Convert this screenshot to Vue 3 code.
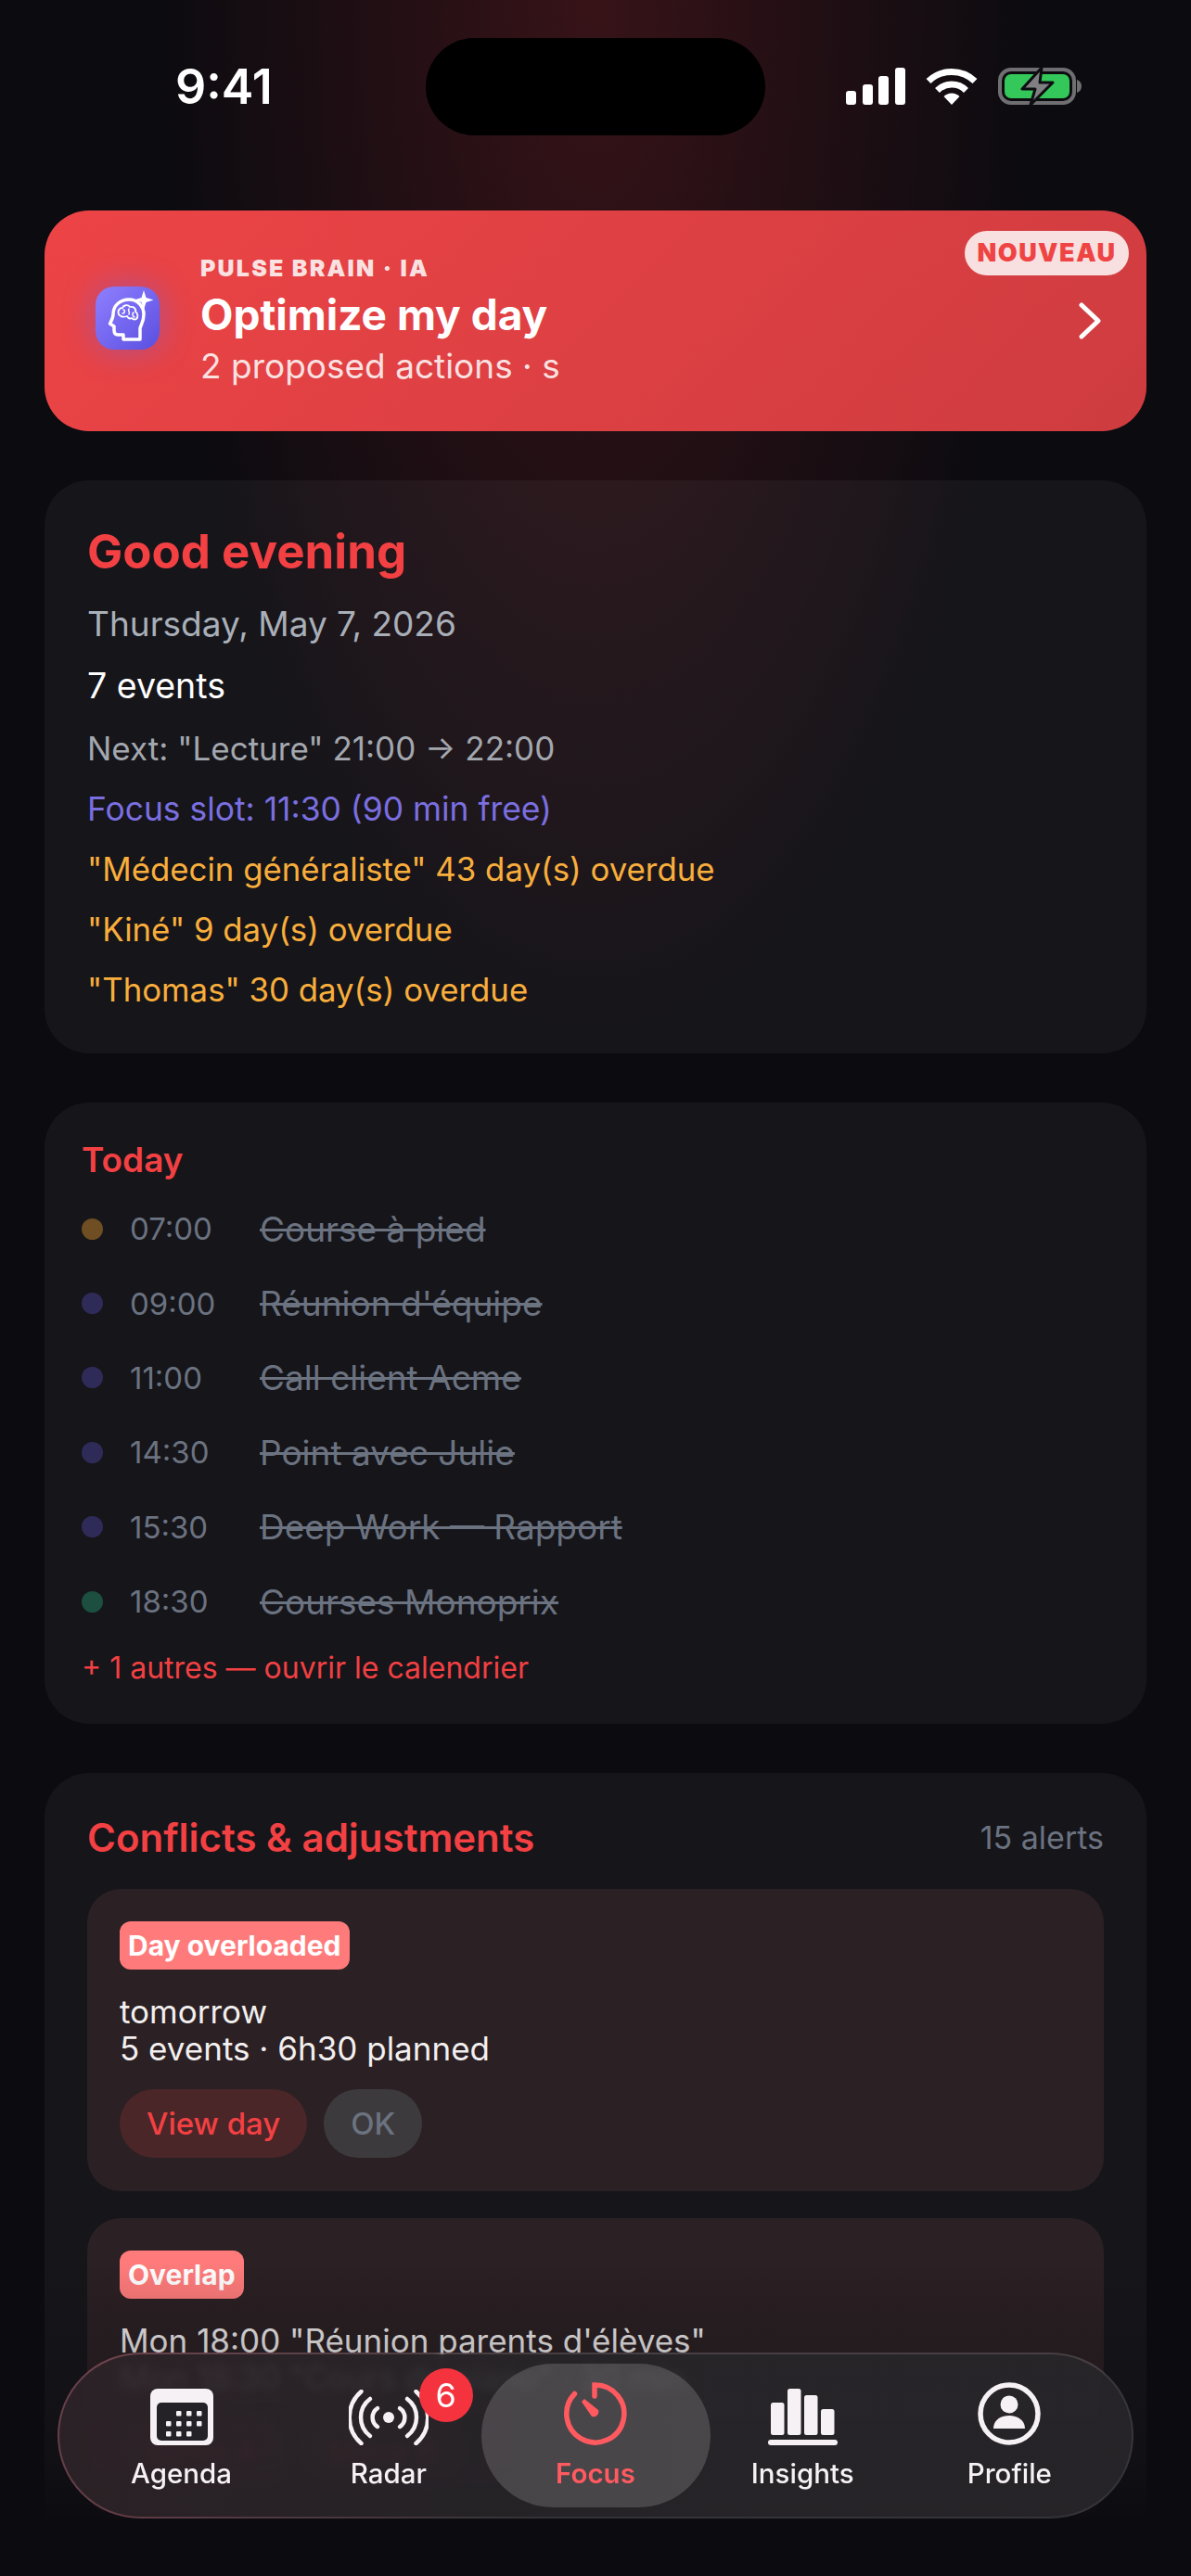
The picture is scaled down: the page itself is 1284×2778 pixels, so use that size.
<template>
  <div class="screen">
    <div class="glow"></div>

    <header class="status">
      <span class="clock">9:41</span>
      <div class="island"></div>
      <div class="status-icons">
        <div class="signal">
          <i v-for="h in signalBars" :key="h" :style="{ height: h + 'px' }"></i>
        </div>
        <svg class="wifi" width="56" height="40" viewBox="0 0 56 40" fill="none" stroke="#fff" stroke-width="7">
          <path d="M3 14.5a36 36 0 0 1 50 0" />
          <path d="M12.5 24.5a22 22 0 0 1 31 0" />
          <path d="M28 40 19.5 31a12 12 0 0 1 17 0Z" fill="#fff" stroke="none" />
        </svg>
        <svg class="battery" width="90" height="42" viewBox="0 0 90 42">
          <rect x="2" y="3" width="80" height="36" rx="12" fill="none" stroke="#6f6f72" stroke-width="4" />
          <path d="M85 14c3 1 5 3.500 5 7s-2 6-5 7Z" fill="#6f6f72" />
          <rect x="7" y="8" width="70" height="26" rx="7" fill="#34c759" />
          <path d="M47 1 26 24h14l-5 17 24-24H45Z" fill="#808083" stroke="#0e0d12" stroke-width="3" stroke-linejoin="round" />
        </svg>
      </div>
    </header>

    <main class="content">
      <section class="banner">
        <span class="new-tag">NOUVEAU</span>
        <div class="brain-icon">
          <svg width="69" height="68" viewBox="0 0 69 68" fill="none" stroke="#fff" stroke-linecap="round" stroke-linejoin="round">
            <path stroke-width="3.500" d="M30 57v-5h-6c-3 0-4-2-4-5v-4l-4.500-3c1.500-3 3.500-6 3.500-10 0-10 8-16 17-16 10 0 16 8 16 16 0 8-3 11-4 15v12Z" />
            <path stroke-width="1.800" d="M25 30c-2-5 2-7 4-7 1-3 6-4 8-1 4-1 7 2 6 5 3 2 3 6 1 8-2 1-4 0-5-1-2 1-4 0-5-2-3 1-7 1-9-2Z" />
            <path stroke-width="1.500" d="M30 25c2 0 2 4-1 4M36 24c-2 2 2 3 0 6M41 28c-2 1-1 4 1 5" />
            <path d="M52 4l2.500 8 8 2.500-8 2.500-2.500 8-2.500-8-8-2.500 8-2.500Z" fill="#fff" stroke="none" />
          </svg>
        </div>
        <div class="banner-text">
          <span class="kicker">PULSE BRAIN · IA</span>
          <span class="banner-title">Optimize my day</span>
          <span class="banner-sub">2 proposed actions · s</span>
        </div>
        <svg class="chevron" width="24" height="40" viewBox="0 0 24 40" fill="none" stroke="#fff" stroke-width="5" stroke-linecap="round" stroke-linejoin="round">
          <path d="M3 3 21 20 3 37" />
        </svg>
      </section>

      <section class="card greeting">
        <h1>Good evening</h1>
        <p class="date">Thursday, May 7, 2026</p>
        <p class="count">7 events</p>
        <p class="next">Next: "Lecture" 21:00 → 22:00</p>
        <p class="slot">Focus slot: 11:30 (90 min free)</p>
        <p v-for="item in overdue" :key="item" class="late">{{ item }}</p>
      </section>

      <section class="card today">
        <h2>Today</h2>
        <div v-for="ev in events" :key="ev.time" class="event">
          <span class="dot" :style="{ background: ev.color }"></span>
          <span class="time">{{ ev.time }}</span>
          <span class="event-name">{{ ev.title }}</span>
        </div>
        <div class="more">+ 1 autres — ouvrir le calendrier</div>
      </section>

      <section class="card conflicts">
        <div class="conflicts-head">
          <h2>Conflicts &amp; adjustments</h2>
          <span>15 alerts</span>
        </div>
        <article class="alert">
          <span class="tag">Day overloaded</span>
          <p>tomorrow<br />5 events · 6h30 planned</p>
          <div class="actions">
            <button class="btn primary">View day</button>
            <button class="btn">OK</button>
          </div>
        </article>
        <article class="alert">
          <span class="tag">Overlap</span>
          <p>Mon 18:00 "Réunion parents d'élèves"<br />Mon 18:30 "Cours de piano" · 30 min</p>
          <div class="actions">
            <button class="btn primary">Move A</button>
            <button class="btn primary">Move B</button>
          </div>
        </article>
      </section>
    </main>

    <div class="bottom-fade"></div>

    <nav class="tabbar">
      <div class="tab">
        <svg width="68" height="61" viewBox="0 0 68 61">
          <rect width="68" height="61" rx="8" fill="#f6f1f4" />
          <rect x="7" y="15" width="55" height="41" rx="5" fill="#242226" />
          <g fill="#f6f1f4">
            <rect v-for="d in calendarDots" :key="d.join()" :x="d[0]" :y="d[1]" width="5.500" height="5.500" rx="1" />
          </g>
        </svg>
        <span>Agenda</span>
      </div>
      <div class="tab">
        <div class="radar">
          <svg width="86" height="60" viewBox="0 0 86 60" fill="none" stroke="#f6f1f4" stroke-width="4.500" stroke-linecap="round">
            <path d="M13.500 2a37 37 0 0 0 0 56M72.500 2a37 37 0 0 1 0 56" />
            <path d="M23 10a25 25 0 0 0 0 40M63 10a25 25 0 0 1 0 40" />
            <path d="M31 20a12 12 0 0 0 0 20M55 20a12 12 0 0 1 0 20" />
            <circle cx="43" cy="30" r="6" fill="#f6f1f4" stroke="none" />
          </svg>
          <b class="badge">6</b>
        </div>
        <span>Radar</span>
      </div>
      <div class="tab active">
        <svg width="68" height="68" viewBox="0 0 68 68" fill="none" stroke="#ff5a5f" stroke-width="5.500" stroke-linecap="round">
          <path d="M33 15V3a31 31 0 1 1-21.500 9.500" />
          <path d="M19 21l3-3 15 12a5.500 5.500 0 0 1-7 7Z" fill="#ff5a5f" stroke="none" />
        </svg>
        <span>Focus</span>
      </div>
      <div class="tab">
        <svg width="75" height="61" viewBox="0 0 75 61" fill="#f6f1f4">
          <rect x="3" y="15" width="14.500" height="35" rx="2.500" />
          <rect x="21" y="0" width="14.500" height="50" rx="2.500" />
          <rect x="39" y="7" width="14.500" height="43" rx="2.500" />
          <rect x="57" y="22" width="14.500" height="28" rx="2.500" />
          <rect y="55" width="75" height="6" rx="3" />
        </svg>
        <span>Insights</span>
      </div>
      <div class="tab">
        <svg width="68" height="68" viewBox="0 0 68 68" fill="none">
          <circle cx="34" cy="34" r="31" stroke="#f6f1f4" stroke-width="5.500" />
          <circle cx="34" cy="24" r="9.500" fill="#f6f1f4" />
          <path d="M17 50c0-9 8-14 17-14s17 5 17 14Z" fill="#f6f1f4" />
        </svg>
        <span>Profile</span>
      </div>
    </nav>
  </div>
</template>

<script setup>
const signalBars = [15, 22, 31, 40]

const overdue = [
  '"Médecin généraliste" 43 day(s) overdue',
  '"Kiné" 9 day(s) overdue',
  '"Thomas" 30 day(s) overdue'
]

const events = [
  { time: '07:00', title: 'Course à pied', color: '#6e4e22' },
  { time: '09:00', title: "Réunion d'équipe", color: '#2f2b58' },
  { time: '11:00', title: 'Call client Acme', color: '#2f2b58' },
  { time: '14:30', title: 'Point avec Julie', color: '#2f2b58' },
  { time: '15:30', title: 'Deep Work — Rapport', color: '#2f2b58' },
  { time: '18:30', title: 'Courses Monoprix', color: '#1c4f3f' }
]

const calendarDots = [
  [28, 24], [39, 24], [50, 24],
  [17, 35], [28, 35], [39, 35], [50, 35],
  [17, 46], [28, 46], [39, 46]
]
</script>

<style>
html, body {
  margin: 0;
  background: #0b0b10;
}
</style>

<style scoped>
.screen {
  position: relative;
  width: 1284px;
  height: 2778px;
  overflow: hidden;
  background: #0b0b10;
  font-family: Inter, "Liberation Sans", sans-serif;
  color: #fff;
}

.glow {
  position: absolute;
  top: 0;
  left: 0;
  right: 0;
  height: 1300px;
  background: radial-gradient(ellipse 480px 1150px at 50% 0, rgba(127, 32, 36, 0.38) 0%, rgba(127, 32, 36, 0.19) 50%, rgba(127, 32, 36, 0) 100%);
}

.status {
  position: relative;
  height: 227px;
}

.clock {
  position: absolute;
  left: 189px;
  top: 66px;
  font-size: 52px;
  line-height: 56px;
  font-weight: 600;
}

.island {
  position: absolute;
  left: 459px;
  top: 41px;
  width: 366px;
  height: 105px;
  border-radius: 53px;
  background: #000;
}

.status-icons {
  position: absolute;
  left: 912px;
  top: 72px;
  height: 42px;
  display: flex;
  align-items: center;
}

.signal {
  display: flex;
  align-items: flex-end;
  gap: 6.5px;
  height: 40px;
}

.signal i {
  width: 11px;
  border-radius: 3px;
  background: #fff;
}

.wifi {
  margin-left: 22px;
}

.battery {
  margin-left: 22px;
}

.content {
  position: relative;
  padding: 0 48px;
  display: flex;
  flex-direction: column;
}

.banner {
  position: relative;
  height: 238px;
  box-sizing: border-box;
  padding: 0 49px 0 55px;
  border-radius: 48px;
  display: flex;
  align-items: center;
  background: linear-gradient(135deg, #ed4446 0%, #ce3c40 100%);
}

.new-tag {
  position: absolute;
  top: 22px;
  right: 19px;
  height: 48px;
  width: 177px;
  border-radius: 24px;
  background: rgba(255, 255, 255, 0.84);
  color: #ef4444;
  font-size: 27px;
  font-weight: 900;
  letter-spacing: 1.5px;
  line-height: 48px;
  text-align: center;
}

.brain-icon {
  flex: none;
  width: 69px;
  height: 68px;
  margin-top: -6px;
  border-radius: 20px;
  background: linear-gradient(135deg, #8f7fff 0%, #5a4fe0 100%);
  box-shadow: 0 0 34px rgba(99, 102, 241, 0.45);
}

.banner-text {
  margin-left: 44px;
  display: flex;
  flex-direction: column;
  flex: 1;
}

.kicker {
  font-size: 25px;
  line-height: 34px;
  font-weight: 900;
  letter-spacing: 2.2px;
  color: rgba(255, 255, 255, 0.85);
}

.banner-title {
  margin-top: 3px;
  font-size: 46px;
  line-height: 60px;
  font-weight: 700;
}

.banner-sub {
  margin-top: 1px;
  font-size: 37px;
  line-height: 50px;
  color: rgba(255, 255, 255, 0.85);
}

.chevron {
  flex: none;
}

.card {
  border-radius: 48px;
  background: rgba(255, 255, 255, 0.042);
}

.greeting {
  margin-top: 53px;
  height: 618px;
  box-sizing: border-box;
  padding: 46px 46px 0;
}

.greeting h1 {
  margin: 0 0 12px;
  font-size: 51px;
  line-height: 62px;
  font-weight: 700;
  color: #f24043;
}

.greeting p {
  margin: 0;
  line-height: 65px;
  font-size: 35px;
}

.greeting .date {
  font-size: 37px;
  line-height: 69px;
  color: #a9afb8;
}

.greeting .count {
  font-size: 37.5px;
  color: #fff;
}

.greeting .next {
  margin-top: 3px;
  color: #a3a7ae;
}

.greeting .slot {
  font-size: 35.4px;
  color: #7b6fe0;
}

.greeting .late {
  font-size: 34.8px;
  color: #f9ae3c;
}

.today {
  margin-top: 53px;
  height: 670px;
  box-sizing: border-box;
  padding: 38px 40px 0;
}

.today h2 {
  margin: 0 0 10px;
  font-size: 37px;
  line-height: 48px;
  font-weight: 600;
  color: #f24043;
}

.event {
  height: 80.4px;
  display: flex;
  align-items: center;
}

.dot {
  width: 23px;
  height: 23px;
  border-radius: 50%;
}

.time {
  margin-left: 29px;
  width: 140px;
  font-size: 33px;
  color: #6b7280;
}

.event-name {
  font-size: 37px;
  color: #6b7280;
  text-decoration: line-through;
}

.more {
  margin-top: 10px;
  font-size: 32px;
  line-height: 44px;
  color: #f24043;
}

.conflicts {
  margin-top: 53px;
  padding: 0 46px;
  height: 1000px;
}

.conflicts-head {
  height: 125px;
  display: flex;
  align-items: center;
  justify-content: space-between;
  padding-top: 13px;
  box-sizing: border-box;
}

.conflicts-head h2 {
  margin: 0;
  font-size: 42px;
  font-weight: 600;
  color: #f24043;
}

.conflicts-head span {
  font-size: 34px;
  color: #6b7280;
}

.alert {
  height: 326px;
  box-sizing: border-box;
  margin-bottom: 29px;
  padding: 35px 35px 0;
  border-radius: 36px;
  background: #2b2023;
}

.tag {
  display: inline-block;
  height: 52px;
  padding: 0 9px;
  border-radius: 12px;
  background: #ff7b7b;
  font-size: 30px;
  line-height: 52px;
  font-weight: 700;
  color: #fff;
}

.alert p {
  margin: 25px 0 24px;
  font-size: 35px;
  line-height: 40px;
  color: #f2efef;
}

.actions {
  display: flex;
  gap: 18px;
}

.btn {
  height: 74px;
  padding: 0 29px;
  border: none;
  border-radius: 37px;
  background: #3d3a3e;
  font-family: inherit;
  font-size: 33px;
  font-weight: 500;
  color: #6b7280;
}

.btn.primary {
  background: #4a2628;
  color: #f24043;
}

.bottom-fade {
  position: absolute;
  left: 0;
  right: 0;
  top: 2440px;
  bottom: 0;
  background: linear-gradient(to bottom, rgba(11, 11, 16, 0) 0, rgba(11, 11, 16, 0.22) 97px, rgba(11, 11, 16, 0.5) 210px, #0c0b10 280px);
}

.tabbar {
  position: absolute;
  left: 62px;
  top: 2537px;
  width: 1160px;
  height: 179px;
  box-sizing: border-box;
  padding: 0 20px;
  border-radius: 90px;
  border: 2px solid transparent;
  display: grid;
  grid-template-columns: repeat(5, 1fr);
  background:
    linear-gradient(to right, rgba(32, 28, 32, 0.84), rgba(36, 34, 38, 0.9) 60%) padding-box,
    linear-gradient(to right, rgba(190, 110, 125, 0.5), rgba(255, 255, 255, 0.16) 45%) border-box;
  backdrop-filter: blur(4px);
}

.tab {
  position: relative;
  display: flex;
  flex-direction: column;
  align-items: center;
  justify-content: flex-end;
  gap: 10px;
  padding-bottom: 27px;
  font-size: 29.5px;
  line-height: 40px;
  font-weight: 500;
  color: #f6f1f4;
}

.tab svg {
  position: relative;
}

.tab span {
  position: relative;
}

.tab.active {
  color: #ff5a5f;
  font-weight: 600;
}

.tab.active::before {
  content: "";
  position: absolute;
  left: -11px;
  right: -12px;
  top: 10px;
  bottom: 10px;
  border-radius: 78px;
  background: rgba(255, 255, 255, 0.16);
}

.radar {
  position: relative;
  height: 60px;
}

.badge {
  position: absolute;
  left: 76px;
  top: -23px;
  width: 58px;
  height: 58px;
  border-radius: 50%;
  background: #f5333f;
  font-size: 36px;
  line-height: 58px;
  font-weight: 400;
  text-align: center;
  color: #fff;
}
</style>
